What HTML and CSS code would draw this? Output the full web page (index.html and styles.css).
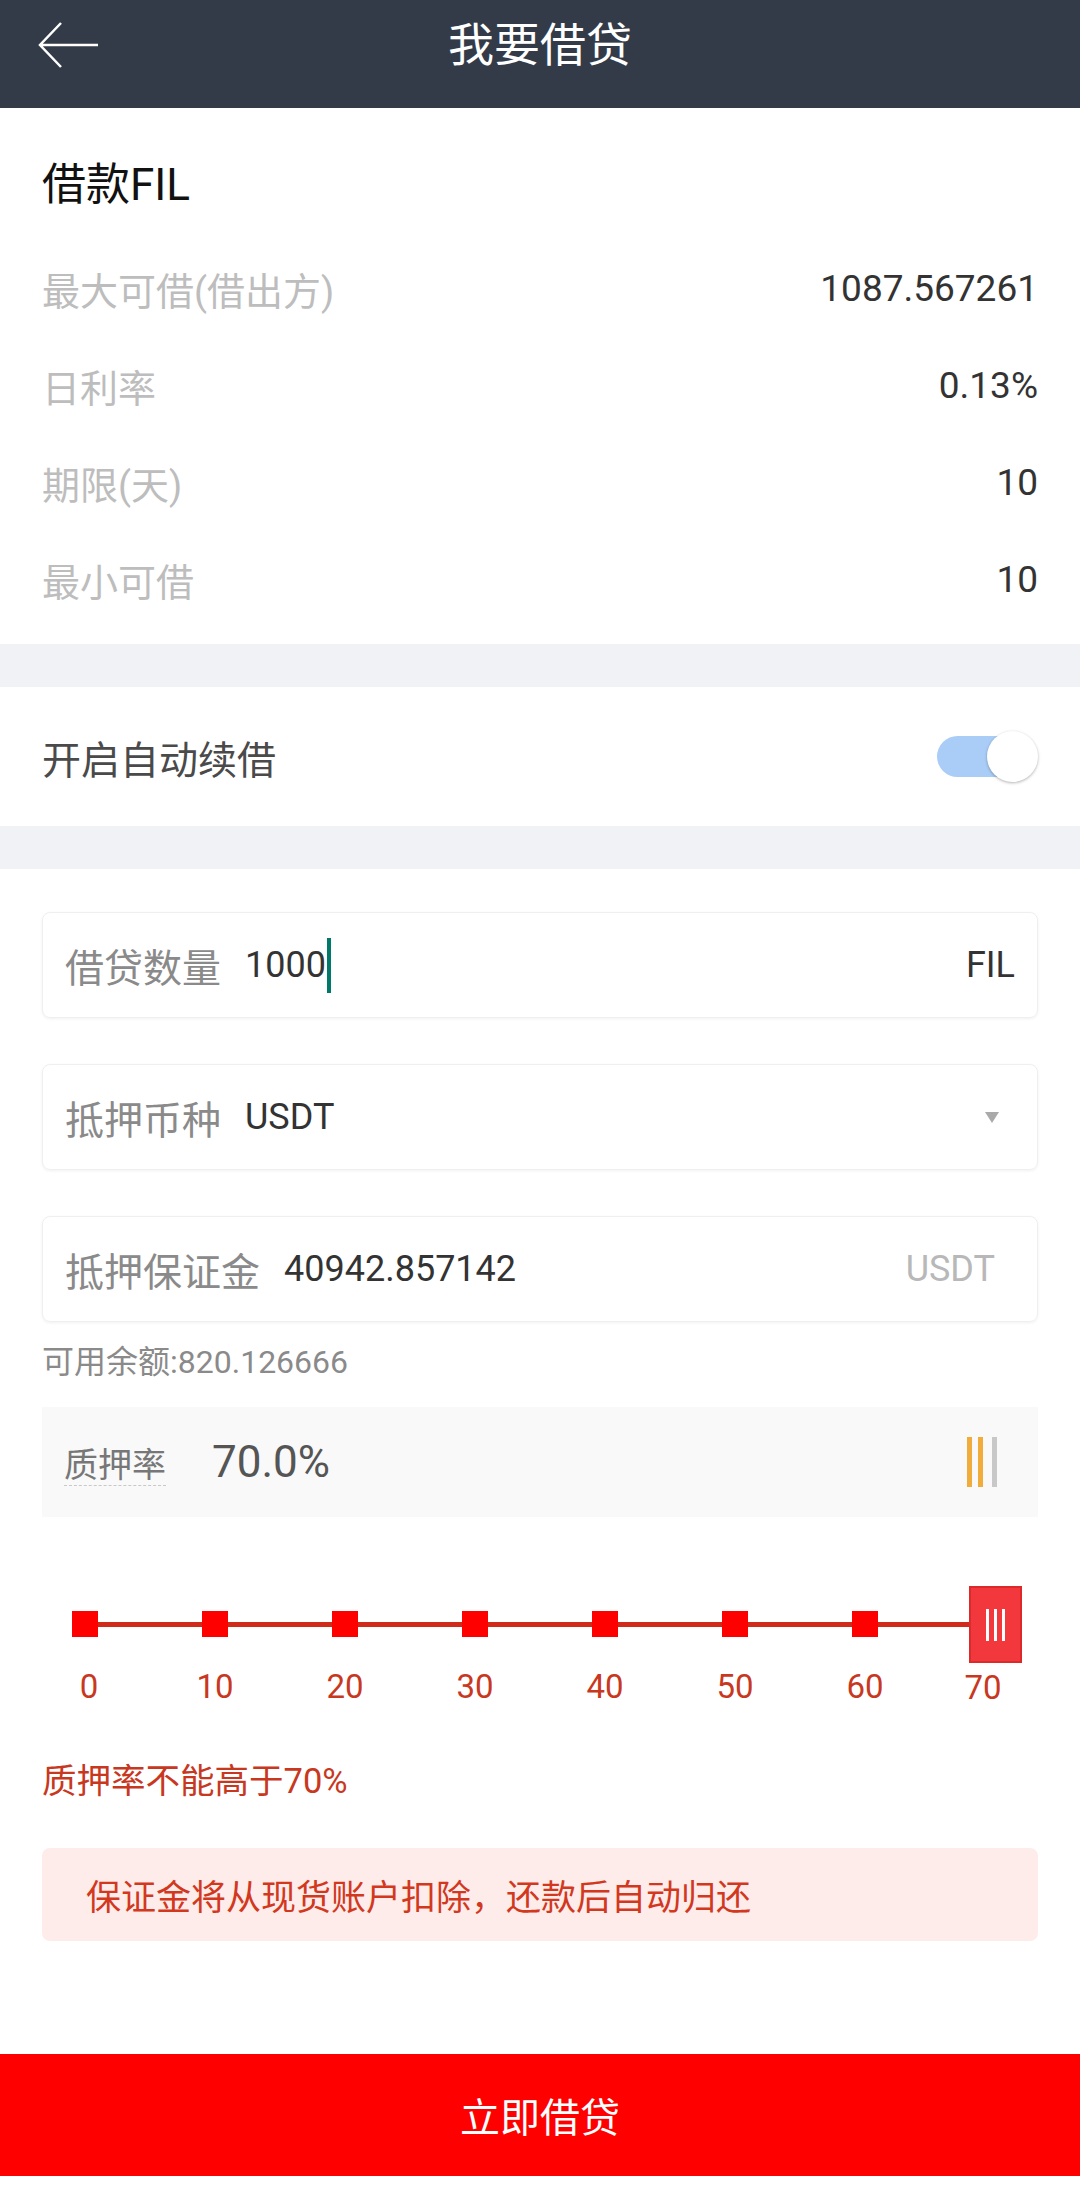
FILE: index.html
```html
<!DOCTYPE html>
<html lang="zh-CN">
<head>
    <meta charset="UTF-8">
    <meta name="viewport" content="width=device-width, initial-scale=1.0">
    <title>我要借贷</title>
    <link rel="stylesheet" href="styles.css">
</head>
<body>
    <header class="topbar">
        <svg class="back" width="60" height="48" viewBox="0 0 60 48">
            <path d="M23 2 L2 24 L23 46 M2 24 H60" fill="none" stroke="#fff" stroke-width="2.5"/>
        </svg>
        <h1 class="topbar-title">我要借贷</h1>
        <span></span>
    </header>

    <section class="info">
        <h2 class="info-title">借款FIL</h2>
        <div class="info-row"><span class="info-label">最大可借(借出方)</span><span class="info-value">1087.567261</span></div>
        <div class="info-row"><span class="info-label">日利率</span><span class="info-value">0.13%</span></div>
        <div class="info-row"><span class="info-label">期限(天)</span><span class="info-value">10</span></div>
        <div class="info-row"><span class="info-label">最小可借</span><span class="info-value">10</span></div>
    </section>

    <div class="divider"></div>

    <section class="switch-row">
        <span>开启自动续借</span>
        <span class="toggle"><span class="toggle-knob"></span></span>
    </section>

    <div class="divider"></div>

    <section class="form">
        <div class="field">
            <span class="field-label">借贷数量</span>
            <span class="field-value">1000</span><span class="cursor"></span>
            <span class="field-unit">FIL</span>
        </div>
        <div class="field">
            <span class="field-label">抵押币种</span>
            <span class="field-value">USDT</span>
            <span class="field-arrow"></span>
        </div>
        <div class="field field-last">
            <span class="field-label">抵押保证金</span>
            <span class="field-value">40942.857142</span>
            <span class="field-unit unit-muted">USDT</span>
        </div>
        <div class="balance">可用余额:820.126666</div>

        <div class="rate">
            <span class="rate-label">质押率</span>
            <span class="rate-value">70.0%</span>
            <span class="rate-bars"><i class="bar-on"></i><i class="bar-on"></i><i class="bar-off"></i></span>
        </div>

        <div class="slider">
            <div class="stop"><span class="dot"></span><span class="stop-label">0</span></div>
            <div class="stop"><span class="dot"></span><span class="stop-label">10</span></div>
            <div class="stop"><span class="dot"></span><span class="stop-label">20</span></div>
            <div class="stop"><span class="dot"></span><span class="stop-label">30</span></div>
            <div class="stop"><span class="dot"></span><span class="stop-label">40</span></div>
            <div class="stop"><span class="dot"></span><span class="stop-label">50</span></div>
            <div class="stop"><span class="dot"></span><span class="stop-label">60</span></div>
            <div class="stop stop-last">
                <span class="handle"><i></i><i></i><i></i></span>
                <span class="stop-label">70</span>
            </div>
        </div>

        <p class="warn">质押率不能高于70%</p>

        <div class="notice">保证金将从现货账户扣除，还款后自动归还</div>
    </section>

    <button class="submit" type="button">立即借贷</button>
</body>
</html>
```

FILE: styles.css
```css
* {
    box-sizing: border-box;
}

body {
    margin: 0;
    width: 1080px;
    height: 2191px;
    overflow: hidden;
    background: #fff;
    font-family: Roboto, "Noto Sans CJK SC", sans-serif;
    color: #333;
}

.topbar {
    height: 108px;
    padding: 0 38px 18px 38px;
    background: #333b49;
    display: grid;
    grid-template-columns: 1fr auto 1fr;
    align-items: center;
}

.back {
    display: block;
}

.topbar-title {
    margin: 0;
    font-size: 46px;
    font-weight: normal;
    color: #fff;
    line-height: 90px;
}

.info {
    padding: 37px 42px 16px 42px;
}

.info-title {
    margin: 0 0 15px 0;
    font-size: 44px;
    font-weight: normal;
    line-height: 80px;
    color: #111;
}

.info-row {
    height: 97px;
    display: flex;
    justify-content: space-between;
    align-items: center;
}

.info-label {
    font-size: 38px;
    color: #bdbdbd;
}

.info-value {
    font-size: 37px;
    color: #333;
}

.divider {
    height: 43px;
    background: #f1f2f5;
}

.switch-row {
    height: 139px;
    padding: 0 42px;
    display: flex;
    justify-content: space-between;
    align-items: center;
    font-size: 39px;
    color: #4a4a4a;
}

.toggle {
    position: relative;
    width: 101px;
    height: 51px;
}

.toggle::before {
    content: "";
    position: absolute;
    left: 0;
    top: 5px;
    width: 92px;
    height: 41px;
    border-radius: 21px;
    background: #a9cdf7;
}

.toggle-knob {
    position: absolute;
    right: 0;
    top: 0;
    width: 51px;
    height: 51px;
    border-radius: 50%;
    background: #fff;
    box-shadow: 0 1px 3px rgba(0, 0, 0, 0.3);
}

.form {
    padding: 43px 42px 0 42px;
}

.field {
    height: 106px;
    margin-bottom: 46px;
    padding: 0 22px;
    display: flex;
    align-items: center;
    border: 1px solid #efefef;
    border-radius: 8px;
    box-shadow: 0 1px 3px rgba(0, 0, 0, 0.06);
}

.field-last {
    margin-bottom: 17px;
}

.field-label {
    font-size: 39px;
    color: #8a8a8a;
    margin-right: 24px;
}

.field-value {
    font-size: 36px;
    color: #333;
}

.cursor {
    display: inline-block;
    width: 4px;
    height: 55px;
    margin-left: 1px;
    background: #00796b;
}

.field-unit {
    margin-left: auto;
    font-size: 36px;
    color: #333;
}

.unit-muted {
    margin-right: 20px;
    color: #b8b8b8;
}

.field-arrow {
    margin-left: auto;
    margin-right: 16px;
    width: 0;
    height: 0;
    border-left: 7px solid transparent;
    border-right: 7px solid transparent;
    border-top: 11px solid #aaa;
}

.balance {
    height: 46px;
    line-height: 46px;
    font-size: 32px;
    color: #8a8a8a;
    margin-bottom: 22px;
}

.rate {
    height: 110px;
    padding: 0 41px 0 22px;
    display: flex;
    align-items: center;
    background: #f9f9f9;
}

.rate-label {
    font-size: 34px;
    color: #777;
    border-bottom: 1px dashed #c8c8c8;
    line-height: 40px;
    margin-top: 6px;
    margin-right: 46px;
}

.rate-value {
    font-size: 44px;
    color: #555;
}

.rate-bars {
    margin-left: auto;
    display: flex;
    gap: 6px;
    height: 50px;
}

.rate-bars i {
    display: block;
    width: 5px;
    height: 50px;
}

.bar-on {
    background: #f0ad3c;
}

.bar-off {
    background: #c8c8c8;
    margin-left: 3px;
}

.slider {
    position: relative;
    margin: 69px -22px 0 -22px;
    display: flex;
}

.slider::before {
    content: "";
    position: absolute;
    left: 65px;
    right: 65px;
    top: 36px;
    height: 5px;
    background: #cf2a1a;
}

.stop {
    position: relative;
    width: 130px;
    display: flex;
    flex-direction: column;
    align-items: center;
}

.dot {
    width: 26px;
    height: 26px;
    margin: 25px 0;
    background: #ff0000;
}

.handle {
    width: 53px;
    height: 77px;
    background: #f2383c;
    border: 2px solid #dc2a2a;
    display: flex;
    justify-content: center;
    align-items: center;
    gap: 5px;
}

.handle i {
    display: block;
    width: 3px;
    height: 32px;
    background: #fff;
}

.stop-label {
    margin-top: 5px;
    line-height: 40px;
    font-size: 33px;
    color: #c8381f;
}

.stop:first-child .stop-label {
    margin-left: 8px;
}

.stop-last .stop-label {
    margin-right: 24px;
}

.warn {
    margin: 50px 0 0 0;
    line-height: 46px;
    font-size: 34.5px;
    color: #c8381f;
}

.notice {
    margin-top: 44px;
    height: 93px;
    padding-left: 44px;
    display: flex;
    align-items: center;
    border-radius: 8px;
    background: #fdecea;
    font-size: 35px;
    color: #d2381e;
}

.submit {
    display: block;
    width: 1080px;
    height: 122px;
    margin-top: 113px;
    border: 0;
    background: #ff0000;
    color: #fff;
    font-family: Roboto, "Noto Sans CJK SC", sans-serif;
    font-size: 40px;
}
```
